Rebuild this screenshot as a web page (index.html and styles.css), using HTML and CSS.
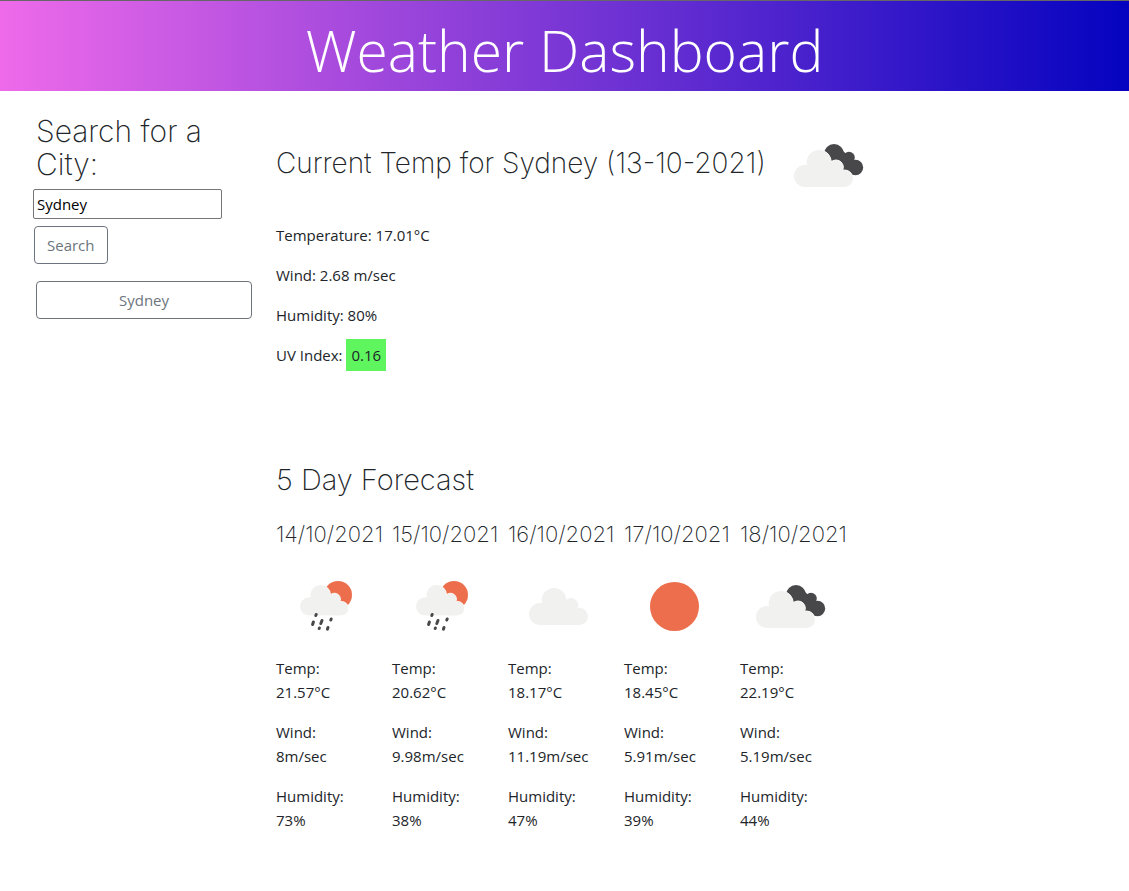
FILE: index.html
```html
<!DOCTYPE html>
<html lang="en">
<head>
<meta charset="utf-8">
<meta name="viewport" content="width=device-width, initial-scale=1">
<title>Weather Dashboard</title>
<link rel="stylesheet" href="styles.css">
</head>
<body>
<svg class="sprite" aria-hidden="true">
  <defs>
    <g id="cloud">
      <circle cx="11" cy="26" r="11"/>
      <circle cx="25" cy="12.300" r="12.300"/>
      <circle cx="42" cy="17.300" r="7.300"/>
      <circle cx="50.500" cy="28.500" r="8.500"/>
      <rect x="11" y="18" width="36" height="19"/>
      <rect x="40" y="28" width="10.500" height="9"/>
    </g>
  </defs>
  <symbol id="broken" viewBox="0 0 100 100">
    <g class="dark">
      <circle cx="56" cy="39" r="10"/>
      <circle cx="71" cy="42.500" r="5.800"/>
      <circle cx="77.500" cy="52.500" r="7.700"/>
      <path d="M56 32L65 36L74 44L80 52L76 60L64 58L50 48Z"/>
    </g>
    <use class="halo" href="#cloud" x="16" y="35"/>
    <use class="pale" href="#cloud" x="16" y="35"/>
  </symbol>
  <symbol id="rain" viewBox="0 0 100 100">
    <circle class="sun" cx="62" cy="39" r="14"/>
    <g transform="translate(24 29) scale(.82)">
      <use class="halo" href="#cloud"/>
      <use class="pale" href="#cloud"/>
    </g>
    <path class="drops" d="M40.200 58.500L39.800 59.500M37.400 66L36.600 68.500M46 64.500L44.800 67.500M55.200 63L54.800 64M43.400 72L43.200 72.500M52 71.500L51.400 73.200"/>
  </symbol>
</svg>

<header class="banner"><h1>Weather Dashboard</h1></header>

<div class="layout">
  <aside class="sidebar">
    <form class="search">
      <label class="heading" for="city">Search for a City:</label>
      <input class="city" id="city" type="text" value="Sydney">
      <button class="button" type="button">Search</button>
    </form>
    <button class="button history" type="button">Sydney</button>
  </aside>

  <main>
    <section class="current">
      <div class="title">
        <h2 class="heading">Current Temp for Sydney (13-10-2021)</h2>
        <svg class="icon" role="img" aria-label="Broken clouds"><use href="#broken"/></svg>
      </div>
      <p>Temperature: 17.01°C</p>
      <p>Wind: 2.68 m/sec</p>
      <p>Humidity: 80%</p>
      <p>UV Index: <span class="uv">0.16</span></p>
    </section>

    <section class="forecast">
      <h2 class="heading">5 Day Forecast</h2>
      <div class="days">
        <article class="day">
          <h3>14/10/2021</h3>
          <svg class="icon" role="img" aria-label="Rain"><use href="#rain"/></svg>
          <p>Temp:<br>21.57°C</p><p>Wind:<br>8m/sec</p><p>Humidity:<br>73%</p>
        </article>
        <article class="day">
          <h3>15/10/2021</h3>
          <svg class="icon" role="img" aria-label="Rain"><use href="#rain"/></svg>
          <p>Temp:<br>20.62°C</p><p>Wind:<br>9.98m/sec</p><p>Humidity:<br>38%</p>
        </article>
        <article class="day">
          <h3>16/10/2021</h3>
          <svg class="icon" viewBox="0 0 100 100" role="img" aria-label="Cloudy"><use class="pale" href="#cloud" x="21" y="32"/></svg>
          <p>Temp:<br>18.17°C</p><p>Wind:<br>11.19m/sec</p><p>Humidity:<br>47%</p>
        </article>
        <article class="day">
          <h3>17/10/2021</h3>
          <svg class="icon" viewBox="0 0 100 100" role="img" aria-label="Clear"><circle class="sun" cx="50.500" cy="50.500" r="24.500"/></svg>
          <p>Temp:<br>18.45°C</p><p>Wind:<br>5.91m/sec</p><p>Humidity:<br>39%</p>
        </article>
        <article class="day">
          <h3>18/10/2021</h3>
          <svg class="icon" role="img" aria-label="Broken clouds"><use href="#broken"/></svg>
          <p>Temp:<br>22.19°C</p><p>Wind:<br>5.19m/sec</p><p>Humidity:<br>44%</p>
        </article>
      </div>
    </section>
  </main>
</div>
</body>
</html>
```

FILE: styles.css
```css
* { box-sizing: border-box; }

body {
  margin: 0;
  background: #fff;
  color: #212529;
  font: 15px/24px "Open Sans", "Noto Sans", sans-serif;
}

h1, h2, h3, p { margin: 0; }

.sprite { position: absolute; width: 0; height: 0; }

.banner {
  border-top: 1px solid #666;
  background: linear-gradient(90deg, #ee6aea, #0503c0);
  color: #fff;
  text-align: center;
}

.banner h1 {
  padding: 11px 0 3px;
  font-size: 57px;
  font-weight: 300;
  line-height: 76px;
}

.layout {
  display: grid;
  grid-template-columns: 216px 1fr;
  gap: 24px;
  padding: 24px 36px;
}

.heading {
  font: 200 28px/33px Inter, Lato, sans-serif;
}

.search {
  display: flex;
  flex-direction: column;
  align-items: flex-start;
  margin-bottom: 17px;
}

.search .heading {
  width: 190px;
  font-size: 30px;
}

.forecast .heading { font-size: 29px; }

.city {
  width: 189px;
  height: 30px;
  margin: 8px 0 7px -3px;
  padding: 1px 3px;
  border: 1px solid #767676;
  border-radius: 2px;
  color: #000;
  font: inherit;
}

.button {
  padding: 6px 12px;
  border: 1px solid #6c757d;
  border-radius: 4px;
  background: transparent;
  color: #6c757d;
  font: inherit;
}

.search .button { margin-left: -2px; }

.history { width: 100%; }

.title {
  display: flex;
  align-items: center;
  gap: 12px;
  margin-bottom: 8px;
}

.title .heading { padding-bottom: 4px; }

.icon {
  display: block;
  flex: none;
  width: 100px;
  height: 100px;
}

.current { margin-bottom: 96px; }

.current p, .day p { margin-bottom: 16px; }

.uv {
  display: inline-block;
  margin: -4px 0;
  padding: 4px 5px;
  background: #5ff55f;
}

.days {
  display: flex;
  gap: 24px;
  margin-top: 24px;
}

.day { width: 92px; }

.day h3 {
  font: 200 22px/28px Inter, Lato, sans-serif;
  white-space: nowrap;
  margin-bottom: 8px;
}

.pale { fill: #f1f1f0; }
.dark { fill: #48484a; }
.sun { fill: #ec6e4c; }
.halo { fill: #fff; stroke: #fff; stroke-width: 1px; }
.drops { fill: none; stroke: #48484a; stroke-width: 3px; stroke-linecap: round; }
```
